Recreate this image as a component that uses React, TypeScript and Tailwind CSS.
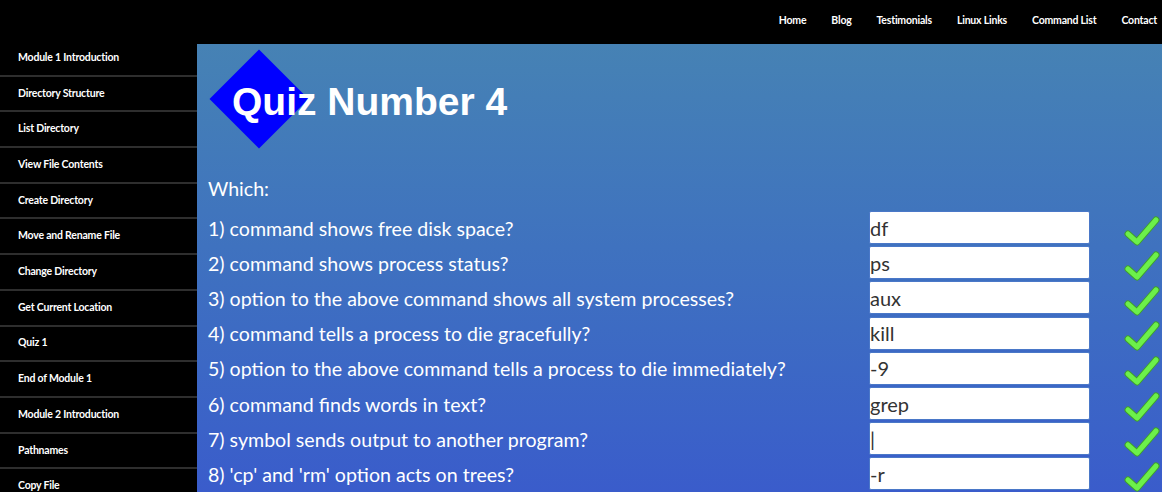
import React from 'react';

const navLinks = ['Home', 'Blog', 'Testimonials', 'Linux Links', 'Command List', 'Contact'];

const sideLinks = [
    'Module 1 Introduction',
    'Directory Structure',
    'List Directory',
    'View File Contents',
    'Create Directory',
    'Move and Rename File',
    'Change Directory',
    'Get Current Location',
    'Quiz 1',
    'End of Module 1',
    'Module 2 Introduction',
    'Pathnames',
    'Copy File',
];

const questions = [
    { q: '1) command shows free disk space?', a: 'df' },
    { q: '2) command shows process status?', a: 'ps' },
    { q: '3) option to the above command shows all system processes?', a: 'aux' },
    { q: '4) command tells a process to die gracefully?', a: 'kill' },
    { q: '5) option to the above command tells a process to die immediately?', a: '-9' },
    { q: '6) command finds words in text?', a: 'grep' },
    { q: '7) symbol sends output to another program?', a: '|' },
    { q: "8) 'cp' and 'rm' option acts on trees?", a: '-r' },
];

const Check = () => (
    <svg width="36" height="30" viewBox="0 0 36 30" className="block">
        <path d="M4 18 L13 26 L32 4" fill="none" stroke="#3f9f2c" strokeWidth="7" strokeLinecap="round" strokeLinejoin="round" />
        <path d="M4 18 L13 26 L32 4" fill="none" stroke="#6cf04a" strokeWidth="5" strokeLinecap="round" strokeLinejoin="round" />
    </svg>
);

export default function App() {
    return (
        <div className="h-screen overflow-hidden bg-black font-['Lato',sans-serif]">
            <header className="h-[44px] flex items-center justify-end gap-[25px] pr-[5px] pb-[2px] bg-black">
                {navLinks.map(link => (
                    <a key={link} className="text-white text-[10.5px] font-bold tracking-[-0.2px]">{link}</a>
                ))}
            </header>

            <div className="flex">
                <nav className="w-[197px] shrink-0 bg-black -mt-[3px]">
                    {sideLinks.map(link => (
                        <div key={link} className="h-[35.7px] flex items-center pl-[18px] border-b-2 border-[#2e2e2e] text-white text-[10.5px] font-bold tracking-[-0.2px]">
                            {link}
                        </div>
                    ))}
                </nav>

                <main className="flex-1 h-[448px] bg-linear-to-b from-[#4682b4] to-[#3a5ccb] pl-[11px]">
                    <div className="relative h-[118px]">
                        <div className="absolute left-[16px] top-[20px] w-[70px] h-[70px] bg-[#0000ff] rotate-45"></div>
                        <h1 className="relative pt-[38px] pl-[24px] text-white text-[39px] leading-none font-bold font-['Liberation_Sans',Arial,sans-serif]">
                            Quiz Number 4
                        </h1>
                    </div>

                    <p className="mt-[15px] text-white text-[19.6px] leading-[24px]">Which:</p>

                    <div className="mt-[9px]">
                        {questions.map(item => (
                            <div key={item.q} className="h-[35.2px] flex items-center">
                                <span className="w-[661px] text-white text-[19.6px] leading-[24px] pt-[2px]">{item.q}</span>
                                <input
                                    readOnly
                                    value={item.a}
                                    className="w-[221px] h-[33px] bg-white border border-[#4a78c8] rounded-[2px] px-0 text-[20px] text-[#333] outline-none"
                                />
                                <div className="ml-[34px] pt-[6px]">
                                    <Check />
                                </div>
                            </div>
                        ))}
                    </div>
                </main>
            </div>
        </div>
    );
}
